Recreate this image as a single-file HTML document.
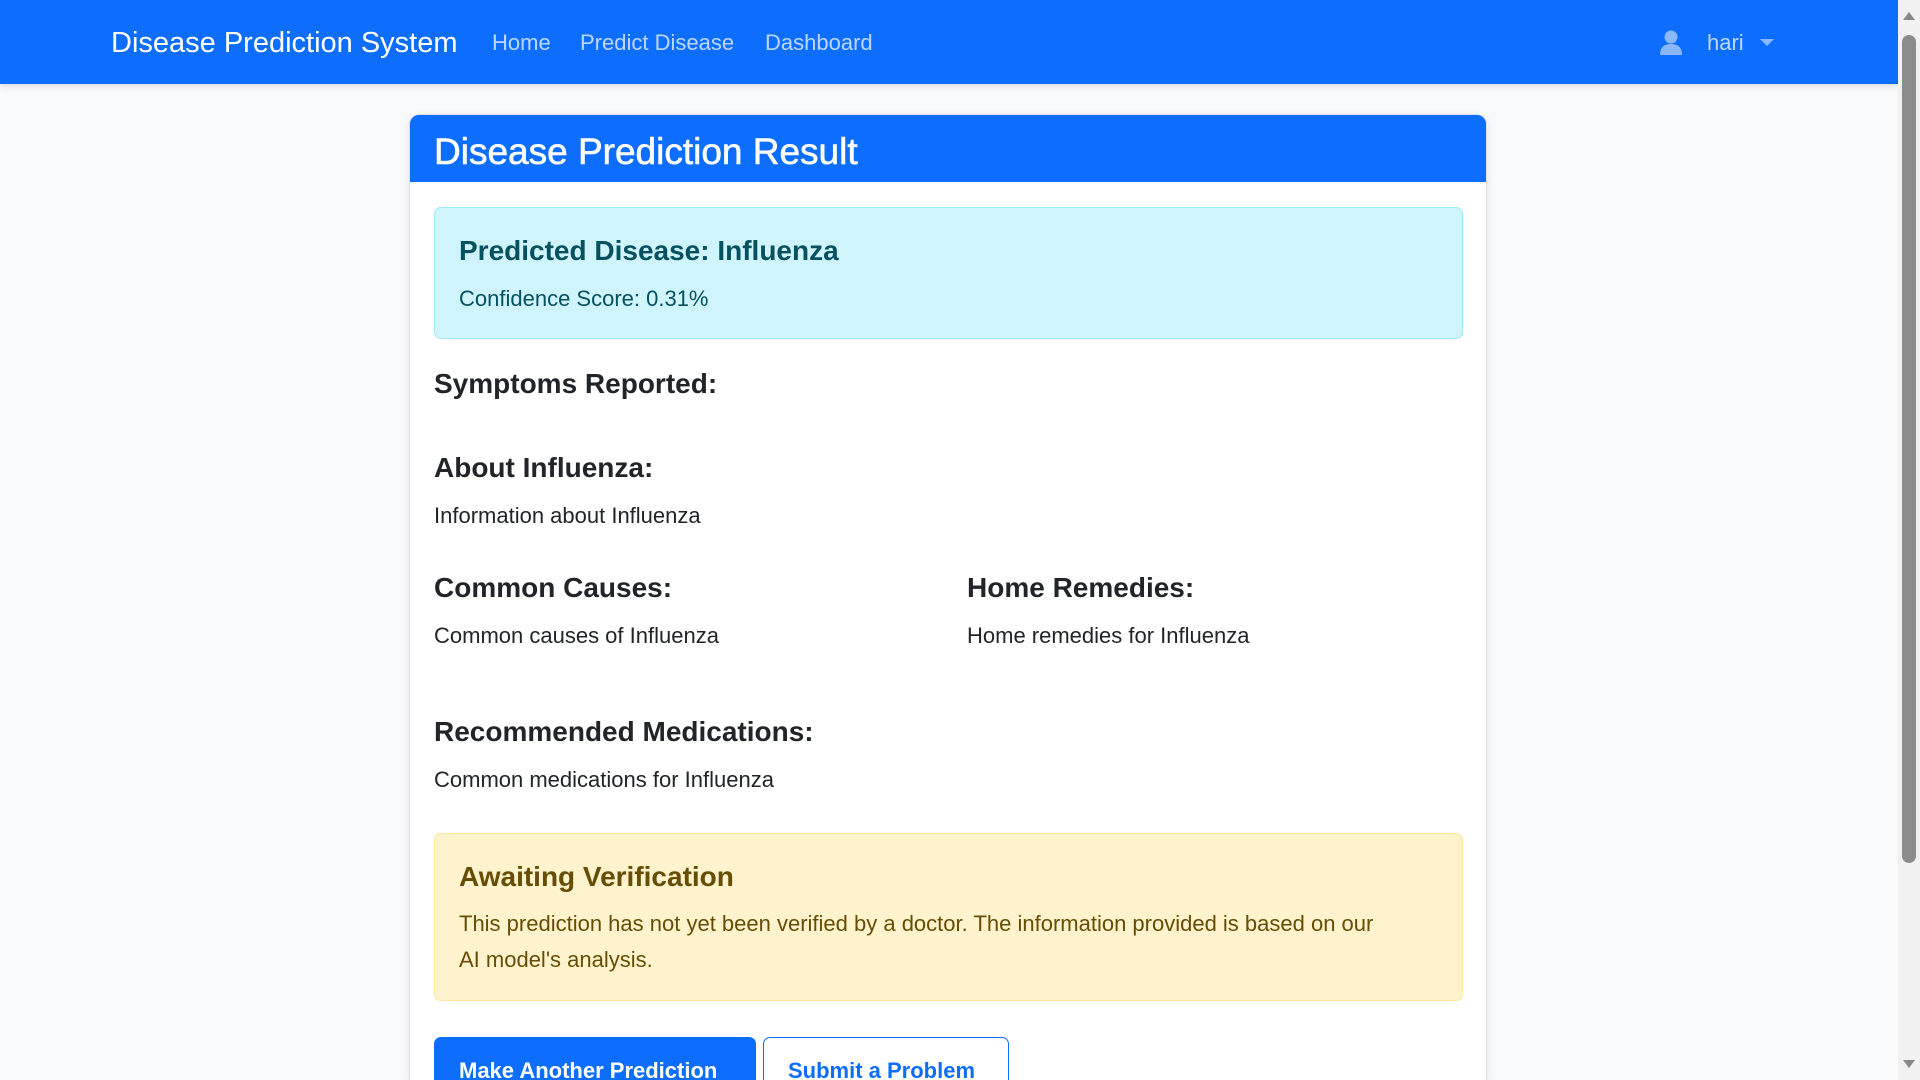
<!DOCTYPE html>
<html style="height:1080px;overflow:hidden"><head><meta charset="utf-8"><style>
*{box-sizing:border-box;margin:0;padding:0}
body{width:1920px;height:1080px;overflow:hidden;background:#f8f9fa;font-family:"Liberation Sans",sans-serif;position:relative;color:#212529}
.a{position:absolute;white-space:nowrap;line-height:1}
.nav{position:absolute;left:0;top:0;width:1898px;height:84px;background:#0d6efd;box-shadow:0 2px 6px rgba(0,0,0,.12)}
.nl{color:rgba(255,255,255,.72);font-size:22px;top:32px}
.card{position:absolute;left:409px;top:114px;width:1078px;height:966px;background:#fff;border:1px solid #dcdfe3;border-bottom:none;border-radius:10px 10px 0 0;overflow:hidden;box-shadow:0 2px 8px rgba(0,0,0,.08)}
.ch{position:absolute;left:0;top:0;width:100%;height:67px;background:#0d6efd}
.h4{font-size:28px;font-weight:bold;color:#212529}
.p{font-size:22px;color:#212529}
.sb{position:absolute;left:1898px;top:0;width:22px;height:1080px;background:#f1f1f1}
</style></head><body>
<div class="nav">
<div class="a" style="left:111px;top:29px;color:#fff;font-size:29px">Disease Prediction System</div>
<div class="a nl" style="left:492px">Home</div>
<div class="a nl" style="left:580px">Predict Disease</div>
<div class="a nl" style="left:765px">Dashboard</div>
<svg class="a" style="left:1660px;top:30px" width="22" height="25" viewBox="0 0 22 25"><circle cx="11" cy="7" r="6.5" fill="#8ab7fe"/><path d="M0 25 Q0 14 11 14 Q22 14 22 25Z" fill="#8ab7fe"/></svg>
<div class="a nl" style="left:1707px;top:32px">hari</div>
<svg class="a" style="left:1760px;top:39px" width="14" height="8"><path d="M0 0H14L7 7Z" fill="#8ab7fe"/></svg>
</div>
<div class="card">
<div class="ch"></div>
<div class="a" style="left:24px;top:18px;color:#fff;font-size:37px;-webkit-text-stroke:0.6px #fff">Disease Prediction Result</div>
<div style="position:absolute;left:24px;top:92px;width:1029px;height:132px;background:#cff4fc;border:1px solid #9eeaf9;border-radius:7px"></div>
<div class="a" style="left:49px;top:122px;font-size:28px;font-weight:bold;color:#055160">Predicted Disease: Influenza</div>
<div class="a" style="left:49px;top:173px;font-size:22px;color:#055160">Confidence Score: 0.31%</div>
<div class="a h4" style="left:24px;top:255px">Symptoms Reported:</div>
<div class="a h4" style="left:24px;top:339px">About Influenza:</div>
<div class="a p" style="left:24px;top:390px">Information about Influenza</div>
<div class="a h4" style="left:24px;top:459px">Common Causes:</div>
<div class="a p" style="left:24px;top:510px">Common causes of Influenza</div>
<div class="a h4" style="left:557px;top:459px">Home Remedies:</div>
<div class="a p" style="left:557px;top:510px">Home remedies for Influenza</div>
<div class="a h4" style="left:24px;top:603px">Recommended Medications:</div>
<div class="a p" style="left:24px;top:654px">Common medications for Influenza</div>
<div style="position:absolute;left:24px;top:718px;width:1029px;height:168px;background:#fff3cd;border:1px solid #ffe69c;border-radius:7px"></div>
<div class="a" style="left:49px;top:748px;font-size:28px;font-weight:bold;color:#664d03">Awaiting Verification</div>
<div class="a" style="left:49px;top:791px;font-size:22px;color:#664d03;line-height:36px;white-space:normal;width:935px">This prediction has not yet been verified by a doctor. The information provided is based on our AI model's analysis.</div>
<div style="position:absolute;left:24px;top:922px;width:322px;height:60px;background:#0d6efd;border-radius:7px"></div>
<div class="a" style="left:49px;top:945px;font-size:22px;font-weight:bold;color:#fff">Make Another Prediction</div>
<div style="position:absolute;left:353px;top:922px;width:246px;height:60px;border:1.5px solid #0d6efd;border-radius:7px"></div>
<div class="a" style="left:378px;top:945px;font-size:22px;font-weight:bold;color:#0d6efd">Submit a Problem</div>
</div>
<div class="sb">
<svg class="a" style="left:5px;top:12px" width="12" height="8"><path d="M0 8L6 0L12 8Z" fill="#888"/></svg>
<div style="position:absolute;left:4px;top:35px;width:14px;height:828px;background:#8c8c8c;border-radius:7px"></div>
<svg class="a" style="left:5px;top:1060px" width="12" height="8"><path d="M0 0L6 8L12 0Z" fill="#888"/></svg>
</div>
</body></html>
